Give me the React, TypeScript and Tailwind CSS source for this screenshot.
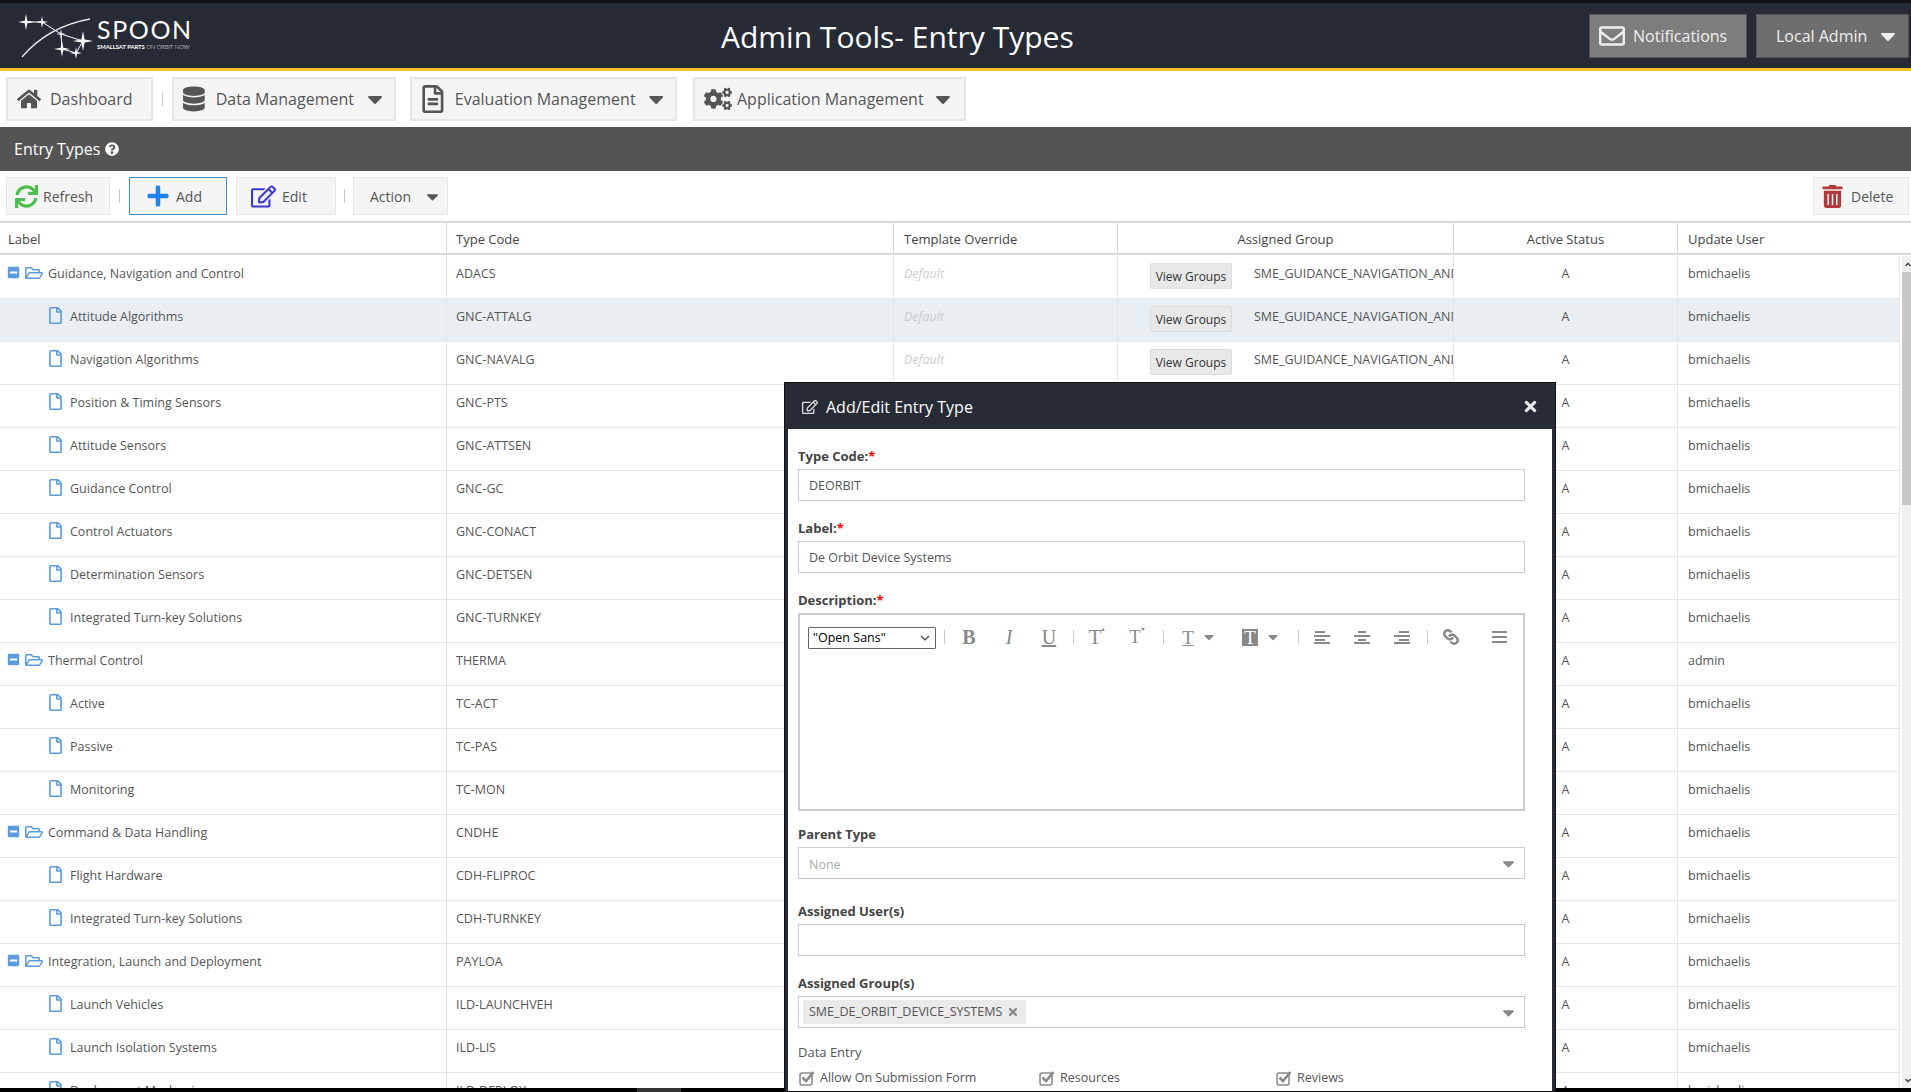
import type { ReactNode } from "react";
import {
  FaHome,
  FaDatabase,
  FaRegFileAlt,
  FaCogs,
  FaSync,
  FaPlus,
  FaRegEdit,
  FaTrashAlt,
  FaQuestionCircle,
  FaRegEnvelope,
  FaCaretDown,
  FaMinusSquare,
  FaRegFolderOpen,
  FaRegFile,
  FaTimes,
  FaLink,
} from "react-icons/fa";

const rows = [
  { label: "Guidance, Navigation and Control", code: "ADACS", parent: true, group: "SME_GUIDANCE_NAVIGATION_AND_CONTROL" },
  { label: "Attitude Algorithms", code: "GNC-ATTALG", selected: true, group: "SME_GUIDANCE_NAVIGATION_AND_CONTROL" },
  { label: "Navigation Algorithms", code: "GNC-NAVALG", group: "SME_GUIDANCE_NAVIGATION_AND_CONTROL" },
  { label: "Position & Timing Sensors", code: "GNC-PTS" },
  { label: "Attitude Sensors", code: "GNC-ATTSEN" },
  { label: "Guidance Control", code: "GNC-GC" },
  { label: "Control Actuators", code: "GNC-CONACT" },
  { label: "Determination Sensors", code: "GNC-DETSEN" },
  { label: "Integrated Turn-key Solutions", code: "GNC-TURNKEY" },
  { label: "Thermal Control", code: "THERMA", parent: true, user: "admin" },
  { label: "Active", code: "TC-ACT" },
  { label: "Passive", code: "TC-PAS" },
  { label: "Monitoring", code: "TC-MON" },
  { label: "Command & Data Handling", code: "CNDHE", parent: true },
  { label: "Flight Hardware", code: "CDH-FLIPROC" },
  { label: "Integrated Turn-key Solutions", code: "CDH-TURNKEY" },
  { label: "Integration, Launch and Deployment", code: "PAYLOA", parent: true },
  { label: "Launch Vehicles", code: "ILD-LAUNCHVEH" },
  { label: "Launch Isolation Systems", code: "ILD-LIS" },
  { label: "Deployment Mechanisms", code: "ILD-DEPLOY" },
];

// four pointed star for the logo
function starPath(x: number, y: number, r: number) {
  const k = r * 0.16;
  return `M${x} ${y - r}L${x + k} ${y - k}L${x + r} ${y}L${x + k} ${y + k}L${x} ${y + r}L${x - k} ${y + k}L${x - r} ${y}L${x - k} ${y - k}Z`;
}

function Logo() {
  return (
    <div className="w-[721px] shrink-0 flex items-center">
      <svg width="92" height="65" viewBox="0 3 92 65">
        <path d="M22 57 C 40 36, 62 24, 90 19" fill="none" stroke="#e8e8e8" strokeWidth="1.3" />
        <path d="M26 22 L42 22 L61 34 L83 41 L76 53 L62 49 L61 34" fill="none" stroke="#fff" strokeWidth="1" />
        <path d={starPath(26, 22, 8)} fill="#fff" />
        <path d={starPath(42, 22, 6)} fill="#fff" />
        <path d={starPath(61, 34, 5)} fill="#fff" />
        <path d={starPath(83, 41, 10)} fill="#fff" />
        <path d={starPath(62, 49, 8)} fill="#fff" />
        <path d={starPath(76, 53, 6)} fill="#fff" />
      </svg>
      <div className="ml-[5px] mt-[-4px] w-[96px] text-white font-['Lato',sans-serif]">
        <div className="text-[25px] leading-[25px] font-normal tracking-[1.6px]">SPOON</div>
        <div className="text-[5.8px] leading-[9px] whitespace-nowrap">
          <span className="font-bold">SMALLSAT PARTS</span> <span className="font-light">ON ORBIT NOW</span>
        </div>
      </div>
    </div>
  );
}

function NavButton({ icon, label, caret, className }: { icon: ReactNode; label: string; caret?: boolean; className: string }) {
  return (
    <div className={`h-[44px] flex items-center border-2 border-[#e6e6e6] bg-[#f5f5f5] text-[#555] text-[16px] shrink-0 ${className}`}>
      {icon}
      <span className="whitespace-nowrap">{label}</span>
      {caret && <FaCaretDown className="ml-auto mr-[9px] text-[#555]" size={24} />}
    </div>
  );
}

function ToolButton({ children, className }: { children: ReactNode; className: string }) {
  return <div className={`h-[38px] flex items-center text-[14px] text-[#555] shrink-0 ${className}`}>{children}</div>;
}

function Sep() {
  return <div className="w-px h-[14px] bg-[#ccc] shrink-0" />;
}

function Field({ label, required, children }: { label: string; required?: boolean; children: ReactNode }) {
  return (
    <div>
      <div className="text-[13px] leading-[18px] font-bold text-[#444]">
        {label}
        {required && <span className="text-[#f00]">*</span>}
      </div>
      {children}
    </div>
  );
}

function AlignIcon({ mode }: { mode: "left" | "center" | "right" }) {
  const short = mode === "left" ? "M1 2H11M1 10H11" : mode === "center" ? "M4 2H12M4 10H12" : "M5 2H15M5 10H15";
  return (
    <svg width="16" height="14" viewBox="0 0 16 14" stroke="#888" strokeWidth="2" fill="none" className="shrink-0">
      <path d={`${short} M0 6H16 M0 13H16`} />
    </svg>
  );
}

function CheckIcon() {
  return (
    <svg width="17" height="16" viewBox="0 0 17 16" className="shrink-0">
      <rect x="1" y="3" width="12" height="12" rx="2" fill="none" stroke="#888" strokeWidth="1.5" />
      <path d="M3.5 7.5 L7 11 L14.5 2" fill="none" stroke="#888" strokeWidth="2.6" />
    </svg>
  );
}

function EditorToolbar() {
  return (
    <div className="flex items-center h-[32px] mt-[6px] ml-[8px] text-[#888]">
      <div className="w-[128px] h-[22px] mt-[2px] border border-[#666] rounded-[1px] flex items-center justify-between px-[4px] text-[12.5px] text-black shrink-0">
        <span>"Open Sans"</span>
        <svg width="10" height="6" viewBox="0 0 10 6" fill="none" stroke="#444" strokeWidth="1.2" className="mr-[1px]">
          <path d="M1 1 L5 5 L9 1" />
        </svg>
      </div>
      <div className="ml-[8px]"><Sep /></div>
      <div className="flex items-center font-['Liberation_Serif',serif] text-[20px] leading-none">
        <span className="ml-[4px] w-[40px] text-center font-bold">B</span>
        <span className="w-[40px] text-center italic">I</span>
        <span className="w-[40px] text-center underline">U</span>
        <div className="ml-[4px]"><Sep /></div>
        <span className="ml-[3px] w-[40px] flex justify-center items-start text-[21px]">
          T
          <svg width="4" height="3" viewBox="0 0 4 3" fill="#888" className="mt-[1px]"><path d="M2 0L4 3H0Z" /></svg>
        </span>
        <span className="w-[40px] flex justify-center items-start text-[18px]">
          T
          <svg width="4" height="3" viewBox="0 0 4 3" fill="#888"><path d="M0 0H4L2 3Z" /></svg>
        </span>
        <div className="ml-[6px]"><Sep /></div>
        <span className="ml-[14px] w-[20px] text-center text-[19px] underline">T</span>
        <FaCaretDown size={16} className="ml-[3px] shrink-0" />
        <span className="ml-[25px] bg-[#888] text-white w-[16px] h-[17px] flex items-center justify-center text-[19px]">T</span>
        <FaCaretDown size={16} className="ml-[7px] shrink-0" />
        <div className="ml-[17px]"><Sep /></div>
      </div>
      <div className="ml-[15px] flex items-center gap-[24px]">
        <AlignIcon mode="left" />
        <AlignIcon mode="center" />
        <AlignIcon mode="right" />
      </div>
      <div className="ml-[17px]"><Sep /></div>
      <FaLink size={16} className="ml-[15px] rotate-90 shrink-0" />
      <svg width="15" height="12" viewBox="0 0 15 12" stroke="#888" strokeWidth="2" className="ml-[33px] shrink-0">
        <path d="M0 1H15M0 6H15M0 11H15" />
      </svg>
    </div>
  );
}

function Modal() {
  return (
    <div className="absolute left-[784px] top-[382px] w-[772px] h-[710px] bg-white border-[1px] border-[#111] overflow-hidden">
      <div className="h-[46px] bg-[#262b35] flex items-center justify-between text-white pl-[17px] pr-[16px]">
        <div className="flex items-center gap-[8px] text-[16px] pt-[1px]">
          <FaRegEdit size={16} className="text-[#ddd]" />
          <span>Add/Edit Entry Type</span>
        </div>
        <FaTimes size={17} className="text-[#e8e8e8]" />
      </div>
      <div className="absolute left-0 top-[46px] bottom-0 w-[3px] bg-[#262b35]" />
      <div className="absolute right-0 top-[46px] bottom-0 w-[3px] bg-[#262b35]" />
      <div className="pl-[13px] w-[740px] pt-[18px] text-[12.5px] text-[#555] flex flex-col">
        <Field label="Type Code:" required>
          <div className="mt-[4px] h-[32px] border border-[#ccc] px-[10px] pt-[2px] flex items-center">DEORBIT</div>
        </Field>
        <div className="mt-[18px]">
          <Field label="Label:" required>
            <div className="mt-[4px] h-[32px] border border-[#ccc] px-[10px] pt-[2px] flex items-center">De Orbit Device Systems</div>
          </Field>
        </div>
        <div className="mt-[18px]">
          <Field label="Description:" required>
            <div className="mt-[4px] h-[198px] border-2 border-[#ccc]">
              <EditorToolbar />
            </div>
          </Field>
        </div>
        <div className="mt-[14px]">
          <Field label="Parent Type">
            <div className="mt-[4px] h-[32px] border border-[#ccc] pl-[10px] pr-[6px] flex items-center justify-between text-[#aaa]">
              <span className="pt-[4px]">None</span>
              <FaCaretDown size={19} className="text-[#888]" />
            </div>
          </Field>
        </div>
        <div className="mt-[23px]">
          <Field label="Assigned User(s)">
            <div className="mt-[4px] h-[32px] border border-[#ccc]" />
          </Field>
        </div>
        <div className="mt-[18px]">
          <Field label="Assigned Group(s)">
            <div className="mt-[4px] h-[32px] border border-[#ccc] pl-[4px] pr-[6px] flex items-center justify-between">
              <div className="h-[24px] w-[223px] bg-[#eaeaea] flex items-center pl-[6px] gap-[5px] text-[12.5px] whitespace-nowrap">
                SME_DE_ORBIT_DEVICE_SYSTEMS
                <FaTimes size={12} className="text-[#888]" />
              </div>
              <FaCaretDown size={19} className="text-[#888]" />
            </div>
          </Field>
        </div>
        <div className="mt-[15px] leading-[18px] text-[13px]">Data Entry</div>
        <div className="mt-[8px] pl-[1px] flex items-center leading-[18px]">
          <div className="w-[240px] flex items-center gap-[4px]"><CheckIcon />Allow On Submission Form</div>
          <div className="w-[237px] flex items-center gap-[4px]"><CheckIcon />Resources</div>
          <div className="flex items-center gap-[4px]"><CheckIcon />Reviews</div>
        </div>
      </div>
    </div>
  );
}

export default function App() {
  return (
    <div className="relative h-[1092px] w-[1911px] overflow-hidden bg-white flex flex-col font-['Open_Sans',sans-serif] text-[#555]">
      <div className="h-[3px] bg-[#111] shrink-0" />
      <header className="h-[65px] bg-[#262b35] flex items-center shrink-0">
        <Logo />
        <div className="flex-1 text-white text-[30px] whitespace-nowrap mt-[2px]">Admin Tools- Entry Types</div>
        <div className="flex items-center gap-[9px] pr-[2px] text-[16px] text-[#eee]">
          <div className="w-[158px] h-[44px] border border-[#555] bg-[#7c7d7c] flex items-center pl-[9px] gap-[8px]">
            <FaRegEnvelope size={26} />
            Notifications
          </div>
          <div className="w-[153px] h-[44px] border border-[#555] bg-[#6d6e6d] flex items-center pl-[19px]">
            Local Admin
            <FaCaretDown size={24} className="ml-[9px]" />
          </div>
        </div>
      </header>
      <div className="h-[3px] bg-[#f5c52a] shrink-0" />
      <nav className="h-[56px] flex items-center pl-[6px] shrink-0">
        <NavButton className="w-[147px] pl-[9px] gap-[9px]" icon={<FaHome size={24} />} label="Dashboard" />
        <div className="ml-[9px] mr-[9px]"><Sep /></div>
        <NavButton className="w-[224px] pl-[9px] gap-[11px]" icon={<FaDatabase size={26} />} caret label="Data Management" />
        <div className="w-[14px]" />
        <NavButton className="w-[267px] pl-[9px] gap-[10px]" icon={<FaRegFileAlt size={28} />} caret label="Evaluation Management" />
        <div className="w-[16px]" />
        <NavButton className="w-[273px] pl-[9px] gap-[5px]" icon={<FaCogs size={28} />} caret label="Application Management" />
      </nav>
      <div className="h-[44px] bg-[#545454] text-white text-[16px] flex items-center pl-[14px] gap-[5px] shrink-0">
        Entry Types
        <FaQuestionCircle size={14} />
      </div>
      <div className="h-[50px] flex items-center pl-[6px] pr-[2px] shrink-0">
        <ToolButton className="w-[104px] border border-[#e6e6e6] bg-[#f5f5f5] pl-[8px] gap-[5px]">
          <FaSync size={23} className="text-[#4cc04f]" />
          <span className="pt-[1px]">Refresh</span>
        </ToolButton>
        <div className="mx-[9px]"><Sep /></div>
        <ToolButton className="w-[98px] border border-[#3d8fd6] bg-[#f5f5f5] pl-[16px] gap-[6px]">
          <FaPlus size={24} className="text-[#1e83ea]" />
          <span className="pt-[1px]">Add</span>
        </ToolButton>
        <ToolButton className="ml-[9px] w-[100px] border border-[#e6e6e6] bg-[#f5f5f5] pl-[14px] gap-[6px]">
          <FaRegEdit size={25} className="text-[#3a3ad0]" />
          <span className="pt-[1px]">Edit</span>
        </ToolButton>
        <div className="mx-[8px]"><Sep /></div>
        <ToolButton className="w-[95px] border border-[#e6e6e6] bg-[#f5f5f5] pl-[16px] gap-[12px]">
          <span className="pt-[1px]">Action</span>
          <FaCaretDown size={19} />
        </ToolButton>
        <ToolButton className="ml-auto w-[96px] border border-[#e6e6e6] bg-[#f5f5f5] pl-[7px] gap-[7px]">
          <FaTrashAlt size={23} className="text-[#b23a3a]" />
          <span className="pt-[1px]">Delete</span>
        </ToolButton>
      </div>
      <div className="grid grid-cols-[447px_447px_224px_336px_224px_1fr] h-[34px] border-y-2 border-[#d8d8d8] text-[13px] text-[#444] items-center shrink-0">
        <div className="pl-[8px] pt-[3px] h-full flex items-center border-r border-[#d8d8d8]">Label</div>
        <div className="pl-[9px] pt-[3px] h-full flex items-center border-r border-[#d8d8d8]">Type Code</div>
        <div className="pl-[10px] pt-[3px] h-full flex items-center border-r border-[#d8d8d8]">Template Override</div>
        <div className="pt-[3px] h-full flex items-center justify-center border-r border-[#d8d8d8]">Assigned Group</div>
        <div className="pt-[3px] h-full flex items-center justify-center border-r border-[#d8d8d8]">Active Status</div>
        <div className="pl-[10px] pt-[3px] h-full flex items-center">Update User</div>
      </div>
      <div className="flex-1 min-h-0 flex overflow-hidden">
        <div className="w-[1900px] mr-[2px] pt-[1px] shrink-0">
          {rows.map((row) => (
            <div
              key={row.code}
              className={`grid grid-cols-[447px_447px_224px_336px_224px_1fr] h-[43px] border-b border-[#e6e6e6] text-[12.5px] ${row.selected ? "bg-[#e9eef2]" : ""}`}
            >
              <div className="border-r border-[#e6e6e6] flex items-start pt-[8px] pl-[7px] min-w-0">
                {row.parent ? (
                  <>
                    <FaMinusSquare size={13} className="text-[#5b9bdc] mt-[2px] shrink-0" />
                    <FaRegFolderOpen size={18} className="text-[#5b9bdc] ml-[5px] shrink-0" />
                    <span className="ml-[5px] mt-[1px]">{row.label}</span>
                  </>
                ) : (
                  <>
                    <FaRegFile size={17} className="text-[#5b9bdc] ml-[40px] shrink-0" />
                    <span className="ml-[6px] mt-[1px]">{row.label}</span>
                  </>
                )}
              </div>
              <div className="border-r border-[#e6e6e6] pl-[9px] pt-[9px]">{row.code}</div>
              <div className="border-r border-[#e6e6e6] pl-[10px] pt-[9px] italic text-[#ccc]">Default</div>
              <div className="border-r border-[#e6e6e6] overflow-hidden whitespace-nowrap flex items-start pt-[7px] pl-[32px]">
                {row.group && (
                  <>
                    <div className="w-[82px] h-[26px] pt-[1px] shrink-0 mr-[22px] bg-[#e8e8e8] border border-[#dcdcdc] rounded-[2px] text-[12px] text-[#333] flex items-center justify-center">
                      View Groups
                    </div>
                    <span className="pt-[2px]">{row.group}</span>
                  </>
                )}
              </div>
              <div className="border-r border-[#e6e6e6] text-center pt-[9px]">A</div>
              <div className="border-r border-[#e6e6e6] pl-[10px] pt-[9px]">{row.user ?? "bmichaelis"}</div>
            </div>
          ))}
        </div>
        <div className="flex-1 bg-[#f0f0f0] flex flex-col mt-px">
          <div className="h-[16px] flex items-center justify-end">
            <svg width="6" height="5" viewBox="0 0 6 5" fill="none" stroke="#555" strokeWidth="1.6"><path d="M0.5 4 L3 1.5 L5.5 4" /></svg>
          </div>
          <div className="h-[233px] bg-[#c8c8c8]" />
          <div className="mt-auto h-[16px] flex items-center justify-end">
            <svg width="6" height="5" viewBox="0 0 6 5" fill="none" stroke="#555" strokeWidth="1.6"><path d="M0.5 1 L3 3.5 L5.5 1" /></svg>
          </div>
        </div>
      </div>
      <div className="h-[4px] bg-black shrink-0 flex">
        <div className="w-[637px]" />
        <div className="w-[44px] bg-[#333]" />
      </div>
      <Modal />
    </div>
  );
}
